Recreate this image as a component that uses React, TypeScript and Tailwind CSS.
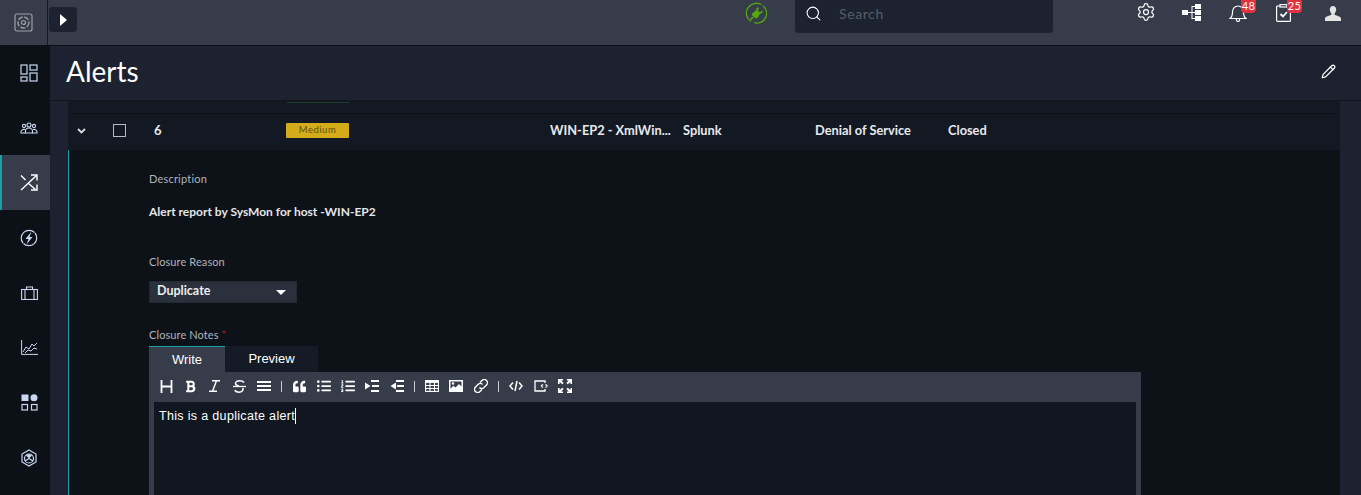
import { Pencil, Search, Settings } from 'lucide-react';
import { FaBold, FaListOl, FaListUl, FaQuoteLeft } from 'react-icons/fa';

const DashboardIcon = () => (
  <svg width="18" height="18" viewBox="0 0 18 18" fill="none" stroke="currentColor" strokeWidth="1.2">
    <rect x="1" y="1" width="6" height="9" />
    <rect x="10" y="1" width="7" height="5" />
    <rect x="1" y="13" width="6" height="4" />
    <rect x="10" y="9" width="7" height="8" />
  </svg>
);

const TeamIcon = () => (
  <svg width="18" height="12" viewBox="0 0 18 12" fill="none" stroke="currentColor" strokeWidth="1.1">
    <circle cx="9" cy="3" r="2" />
    <circle cx="4" cy="4" r="1.6" />
    <circle cx="14" cy="4" r="1.6" />
    <path d="M5.5 11V9a3.5 3 0 0 1 7 0v2z" />
    <path d="M5.5 11H1V9.500a3 2.500 0 0 1 4-2M12.500 11H17V9.500a3 2.500 0 0 0-4-2" />
  </svg>
);

const ShuffleIcon = () => (
  <svg width="18" height="17" viewBox="0 0 18 17" fill="none" stroke="currentColor" strokeWidth="1.4">
    <path d="M1 1.500 5.500 6M8 9l7.500 6.500M1 16 16.500 1.500" />
    <path d="M11 1h6v5.500M17 10.500V16h-6" />
  </svg>
);

const BoltIcon = () => (
  <svg width="18" height="18" viewBox="0 0 18 18" fill="none" stroke="currentColor" strokeWidth="1.2">
    <path d="M14.500 3.500A7.800 7.800 0 0 0 3 14M3.500 14.500A7.800 7.800 0 0 0 15 4" />
    <path d="M11.500 2.500 5.500 10h3l-2 5.500L12.500 8h-3z" fill="currentColor" stroke="none" />
  </svg>
);

const CaseIcon = () => (
  <svg width="17" height="14" viewBox="0 0 17 14" fill="none" stroke="currentColor" strokeWidth="1.1">
    <rect x="0.600" y="3.500" width="15.800" height="10" />
    <path d="M5.500 3.500V1h6v2.500M4 3.500v10M13 3.500v10" />
  </svg>
);

const ChartIcon = () => (
  <svg width="17" height="15" viewBox="0 0 17 15" fill="none" stroke="currentColor" strokeWidth="1">
    <path d="M0.600 0v14.400H17" />
    <path d="M2 12l3-5 3 2 3-5 2 2 3-3" />
    <path d="M4 13l3-3 3 1 3-3 3 1" />
  </svg>
);

const WidgetsIcon = () => (
  <svg width="17" height="17" viewBox="0 0 17 17" fill="none" stroke="currentColor" strokeWidth="1.2">
    <rect x="0.500" y="0.500" width="7" height="6.500" fill="currentColor" stroke="none" />
    <circle cx="13" cy="3.700" r="3.500" fill="currentColor" stroke="none" />
    <rect x="1" y="10.500" width="5.500" height="5.500" />
    <rect x="10.500" y="10.500" width="5.500" height="5.500" />
  </svg>
);

const HexIcon = () => (
  <svg width="16" height="18" viewBox="0 0 16 18" fill="none" stroke="currentColor" strokeWidth="1.2">
    <path d="M8 1l7 4v8l-7 4-7-4V5z" />
    <circle cx="8" cy="9.500" r="4.500" />
    <path d="M5 6.500a4.500 4.500 0 0 1 6 0L8 9.500z" fill="currentColor" stroke="none" />
    <path d="M8 9.500l4 2.500M8 9.500l-4 2.500" />
  </svg>
);

const TreeIcon = () => (
  <svg width="19" height="17" viewBox="0 0 19 17" fill="currentColor">
    <rect x="0" y="6" width="6" height="5" />
    <rect x="13" y="0" width="6" height="5" />
    <rect x="13" y="6" width="6" height="5" />
    <rect x="13" y="12" width="6" height="5" />
    <path d="M6 8h3.500V2H13v1h-2.500v5H13v1h-2.500v5H13v1H9.500V9H6z" />
  </svg>
);

const LogoIcon = () => (
  <svg width="19" height="19" viewBox="0 0 19 19" fill="none" stroke="#9aa0a8">
    <rect x="1" y="1" width="17" height="17" rx="2" strokeWidth="1.200" />
    <circle cx="9.500" cy="9.500" r="5.500" strokeWidth="1.400" strokeDasharray="5 1.500" />
    <circle cx="9.500" cy="9.500" r="2" strokeWidth="1.200" />
  </svg>
);

const PlugIcon = () => (
  <svg width="22" height="22" viewBox="0 0 22 22" fill="none" stroke="#55a80f" strokeWidth="1.300">
    <path d="M16.500 2.800A9.800 9.800 0 0 0 6 19.500M9 20.700a9.800 9.800 0 0 0 9-17" />
    <path d="M6.500 12l5.500-4.500 3.500 3.500-3 5c-2.500 1-5-1.500-6-4z" fill="#55a80f" stroke="none" />
    <path d="M11.500 8l2-2.500M15 11l2.500-1.500M8 15.500l-2.500 2" strokeWidth="1.800" />
  </svg>
);

const UserIcon = () => (
  <svg width="16" height="15" viewBox="0 0 16 15" fill="#e4e4e4">
    <path d="M8 0c2 0 3.200 1.500 3.200 3.600 0 1.700-.8 3-1.500 3.800-.4.500-.2 1.200.4 1.500 2.400 1 5.900 1.500 5.900 3.600V15H0v-2.500C0 10.400 3.500 9.900 5.900 8.900c.6-.3.800-1 .4-1.500C5.600 6.600 4.800 5.300 4.800 3.600 4.800 1.500 6 0 8 0z" />
  </svg>
);

const BellIcon = () => (
  <svg width="18" height="19" viewBox="0 0 18 19" fill="none" stroke="currentColor" strokeWidth="1.200">
    <path d="M1 15.500c2-1.500 2.500-3.500 2.500-6.500C3.500 5.500 6 3 9 3s5.500 2.500 5.500 6c0 3 .5 5 2.500 6.500z" />
    <path d="M7.500 15.500v1.500a1.500 1.500 0 0 0 3 0v-1.500" />
  </svg>
);

const ClipboardIcon = () => (
  <svg width="15" height="18" viewBox="0 0 15 18" fill="none" stroke="currentColor" strokeWidth="1.200">
    <rect x="0.600" y="2" width="13.800" height="15.400" rx="1" />
    <rect x="4" y="0.600" width="7" height="2.400" fill="#363c4a" />
    <path d="M4.500 10l2.500 2.500 4-4.500" strokeWidth="1.800" />
  </svg>
);

const HeadingIcon = () => (
  <svg width="13" height="13" viewBox="0 0 13 13" fill="none" stroke="currentColor" strokeWidth="1.800">
    <path d="M1.500 0v13M11.500 0v13M1.500 6.500h10" />
  </svg>
);

const ItalicIcon = () => (
  <svg width="11" height="12" viewBox="0 0 11 12" fill="none" stroke="currentColor" strokeWidth="1.400">
    <path d="M3 .7h8M0 11.300h8M7.500 .7 3.500 11.300" />
  </svg>
);

const StrikeIcon = () => (
  <svg width="13" height="13" viewBox="0 0 13 13" fill="none" stroke="currentColor" strokeWidth="1.600">
    <path d="M11 2.500C10 1 8.500.8 6.500.8 4 .8 2.500 2 2.500 3.500S4 5.500 6 6" />
    <path d="M0 6.500h13" strokeWidth="1.300" />
    <path d="M10 8c.5 2.500-1.500 4.200-3.800 4.200-2 0-3.500-.5-4.500-2" />
  </svg>
);

const JustifyIcon = () => (
  <svg width="14" height="11" viewBox="0 0 14 11" fill="currentColor">
    <rect x="0" y="0" width="14" height="2" />
    <rect x="0" y="4" width="14" height="2" />
    <rect x="0" y="8" width="14" height="2" />
  </svg>
);

const IndentIcon = () => (
  <svg width="14" height="12" viewBox="0 0 14 12" fill="currentColor">
    <path d="M0 2.500 5.500 6 0 9.500z" />
    <rect x="6" y="0" width="8" height="2" />
    <rect x="7" y="5" width="7" height="2" />
    <rect x="6" y="10" width="8" height="2" />
  </svg>
);

const OutdentIcon = () => (
  <svg width="14" height="12" viewBox="0 0 14 12" fill="currentColor">
    <path d="M6 2.500.5 6 6 9.500z" />
    <rect x="6" y="0" width="8" height="2" />
    <rect x="7" y="5" width="7" height="2" />
    <rect x="6" y="10" width="8" height="2" />
  </svg>
);

const TableIcon = () => (
  <svg width="14" height="12" viewBox="0 0 14 12" fill="none" stroke="currentColor" strokeWidth="1.100">
    <rect x="0.600" y="0.600" width="12.800" height="10.800" />
    <path d="M0 1.800h14" strokeWidth="2.200" />
    <path d="M0 5.500h14M0 8.500h14M5 2v10M9.500 2v10" />
  </svg>
);

const ImageIcon = () => (
  <svg width="14" height="12" viewBox="0 0 14 12" fill="none">
    <path d="M0 0h14v12H0zM1.500 1.500v7.200l3-3 2 1.800 3.500-3.500 2.500 2.500v-5z" fill="currentColor" fillRule="evenodd" />
    <circle cx="4" cy="3.500" r="1.200" fill="currentColor" />
  </svg>
);

const LinkIcon = () => (
  <svg width="14" height="14" viewBox="0 0 14 14" fill="none" stroke="currentColor" strokeWidth="1.400">
    <path d="M6 3.500 8 1.500a2.800 2.800 0 0 1 4.500 4.500L9.500 9a2.800 2.800 0 0 1-4-.5" />
    <path d="M8 10.500 6 12.500a2.800 2.800 0 0 1-4.500-4.500L4.500 5a2.800 2.800 0 0 1 4 .5" />
  </svg>
);

const CodeIcon = () => (
  <svg width="14" height="12" viewBox="0 0 14 12" fill="none" stroke="currentColor" strokeWidth="1.500">
    <path d="M4 2.500 1 6l3 3.500M10 2.500 13 6l-3 3.500M8 1 6 11" />
  </svg>
);

const PreviewIcon = () => (
  <svg width="14" height="12" viewBox="0 0 14 12" fill="none" stroke="currentColor" strokeWidth="1.300">
    <path d="M11 3V1H1v10h10V9" />
    <path d="M7 6l2-1.500M7 6l2 1.500M13.500 6 11.500 4.500M13.500 6 11.500 7.500" />
  </svg>
);

const ExpandIcon = () => (
  <svg width="14" height="14" viewBox="0 0 14 14" fill="currentColor">
    <path d="M0 0h5v1.600H3.200l2.400 2.400-1.300 1.300L1.600 2.900V5H0zM14 0v5h-1.600V2.900L9.700 5.300 8.400 4l2.400-2.400H9V0zM0 14V9h1.600v2.100l2.700-2.400 1.300 1.300-2.400 2.400H5V14zM14 14H9v-1.600h1.800L8.400 10l1.300-1.300 2.700 2.400V9H14z" />
  </svg>
);

const navItems = [
  { icon: <DashboardIcon />, active: false },
  { icon: <TeamIcon />, active: false },
  { icon: <ShuffleIcon />, active: true },
  { icon: <BoltIcon />, active: false },
  { icon: <CaseIcon />, active: false },
  { icon: <ChartIcon />, active: false },
  { icon: <WidgetsIcon />, active: false },
  { icon: <HexIcon />, active: false },
];

const Divider = () => <span className="mx-[5px] h-[11px] w-px bg-[#c8ccd2]" />;

const ToolButton = ({ children }: { children: React.ReactNode }) => (
  <span className="flex w-[24.400px] shrink-0 items-center justify-center text-white">{children}</span>
);

const Badge = ({ children, className }: { children: React.ReactNode; className: string }) => (
  <span
    className={`absolute flex h-[13px] w-[15px] justify-center rounded-b-sm bg-[#e0313c] text-[11px] leading-[12px] tracking-[0.4px] text-white ${className}`}
  >
    {children}
  </span>
);

const App = () => {
  return (
    <div className="flex h-[495px] w-[1361px] flex-col overflow-hidden bg-[#1c2230] font-['Lato',sans-serif]">
      {/* Top bar */}
      <div className="flex h-[46px] shrink-0 items-start border-b border-[#0b0e13] bg-[#363c4a]">
        <div className="flex h-[45px] w-[48px] shrink-0 items-center justify-center border-r border-[#14181f]">
          <LogoIcon />
        </div>
        <button className="mt-[7px] ml-px flex h-[25px] w-[28px] items-center justify-center rounded-sm bg-[#1c2230]">
          <span className="h-0 w-0 border-y-[6px] border-l-[7px] border-y-transparent border-l-white" />
        </button>
        <div className="mt-[1px] ml-[667px] flex h-[24px] w-[24px] items-center justify-center">
          <PlugIcon />
        </div>
        <div className="ml-[27px] flex h-[33px] w-[258px] items-center rounded-b-sm bg-[#1c2230] pb-[6px] pl-[10px]">
          <Search size={17} strokeWidth={1.5} className="text-white" />
          <span className="ml-[17px] text-[14px] tracking-[0.6px] text-[#565c68]">Search</span>
        </div>
        <Settings size={20} strokeWidth={1.500} className="mt-[2px] ml-[83px] text-white" />
        <div className="mt-[4px] ml-[26px] text-white">
          <TreeIcon />
        </div>
        <div className="relative mt-[3px] ml-[28px] text-white">
          <BellIcon />
          <Badge className="top-[-3px] left-[12px]">48</Badge>
        </div>
        <div className="relative mt-[4px] ml-[29px] text-white">
          <ClipboardIcon />
          <Badge className="top-[-4px] left-[11px]">25</Badge>
        </div>
        <div className="mt-[6px] ml-[34px]">
          <UserIcon />
        </div>
      </div>

      <div className="flex min-h-0 flex-1">
        {/* Sidebar */}
        <div className="-mt-px flex w-[50px] shrink-0 flex-col bg-[#0c1118]">
          {navItems.map((item, i) => (
            <div
              key={i}
              className={`flex h-[55px] shrink-0 items-center justify-center ${
                item.active ? 'border-l-2 border-[#1a9ea6] bg-[#363c4a] pl-[6px] text-white' : 'pl-[8px] text-[#c9d8f0]'
              }`}
            >
              {item.icon}
            </div>
          ))}
        </div>

        <div className="flex min-w-0 flex-1 flex-col">
          {/* Page header */}
          <div className="flex h-[55px] shrink-0 items-center justify-between border-b border-[#11151c] bg-[#1c2230] pr-[25px] pb-[4px] pl-[16px]">
            <h1 className="text-[28px] leading-none text-white">Alerts</h1>
            <Pencil size={15} strokeWidth={2} className="text-white" />
          </div>

          <div className="flex min-h-0 flex-1 pr-[21px] pl-[18px]">
            <div className="flex min-w-0 flex-1 flex-col">
              {/* Table rows */}
              <div className="h-[13px] shrink-0 border-b border-[#0c1118] bg-[#121923] pt-px pl-[219px]">
                <div className="h-px w-[62px] bg-[#1b3f2b]" />
              </div>
              <div className="grid h-[36px] shrink-0 grid-cols-[45px_41px_132px_264px_133px_132px_133px_1fr] items-center bg-[#121923] pb-[3px] text-[12.800px] font-bold text-[#e8eaed]">
                <svg width="9" height="6" viewBox="0 0 9 6" fill="none" stroke="#d8dade" strokeWidth="1.800" className="ml-[9px]">
                  <path d="M1 1l3.500 3.500L8 1" />
                </svg>
                <span className="h-[13px] w-[13px] border border-[#b8bcc2]" />
                <span className="text-[13px]">6</span>
                <span className="flex h-[15px] w-[63px] items-center justify-center rounded-[1px] bg-[#d4ac19] text-[9.500px] font-normal tracking-[0.5px] text-[#5c4f12]">
                  Medium
                </span>
                <span className="truncate">WIN-EP2 - XmlWin...</span>
                <span>Splunk</span>
                <span>Denial of Service</span>
                <span>Closed</span>
              </div>

              {/* Expanded row */}
              <div className="min-h-0 flex-1 border-l border-[#1a9ea6] bg-[#0d1118] pl-[80px]">
                <div className="mt-[23px] text-[11px] leading-[12px] tracking-[0.2px] text-[#b0b4ba]">Description</div>
                <div className="mt-[20px] text-[12px] leading-[13px] font-bold text-[#e4e6e9]">
                  Alert report by SysMon for host -WIN-EP2
                </div>
                <div className="mt-[38px] text-[11px] leading-[12px] tracking-[0.1px] text-[#b0b4ba]">Closure Reason</div>
                <div className="mt-[13px] flex h-[22px] w-[148px] items-center justify-between border border-[#232933] bg-[#2a303c] pr-[10px] pb-[2px] pl-[7px] text-[12.500px] font-bold text-[#eceef0]">
                  Duplicate
                  <span className="mt-[2px] h-0 w-0 border-x-[5px] border-t-[5px] border-x-transparent border-t-white" />
                </div>
                <div className="mt-[26px] text-[11px] leading-[12px] tracking-[0.1px] text-[#b0b4ba]">
                  Closure Notes <span className="text-[#b0202a]">*</span>
                </div>
                <div className="mt-[5px] flex h-[26px] font-['Liberation_Sans',sans-serif] text-[13px] text-white">
                  <div className="flex w-[76px] items-center justify-center border-t border-[#1a9ea6] bg-[#363c4a]">Write</div>
                  <div className="flex w-[93px] items-center justify-center bg-[#141b26]">Preview</div>
                </div>
                <div className="w-[992px] bg-[#363c4a] px-[5px]">
                  <div className="flex h-[30px] items-center pb-[2px]">
                    <ToolButton><HeadingIcon /></ToolButton>
                    <ToolButton><FaBold size={13} /></ToolButton>
                    <ToolButton><ItalicIcon /></ToolButton>
                    <ToolButton><StrikeIcon /></ToolButton>
                    <ToolButton><JustifyIcon /></ToolButton>
                    <Divider />
                    <ToolButton><FaQuoteLeft size={13} /></ToolButton>
                    <ToolButton><FaListUl size={14} /></ToolButton>
                    <ToolButton><FaListOl size={14} /></ToolButton>
                    <ToolButton><IndentIcon /></ToolButton>
                    <ToolButton><OutdentIcon /></ToolButton>
                    <Divider />
                    <ToolButton><TableIcon /></ToolButton>
                    <ToolButton><ImageIcon /></ToolButton>
                    <ToolButton><LinkIcon /></ToolButton>
                    <Divider />
                    <ToolButton><CodeIcon /></ToolButton>
                    <ToolButton><PreviewIcon /></ToolButton>
                    <ToolButton><ExpandIcon /></ToolButton>
                  </div>
                  <div className="flex h-[200px] items-start bg-[#101720] pt-[6px] pl-[5px] font-['Liberation_Sans',sans-serif] text-[12.500px] leading-[16px] tracking-[0.33px] text-white">
                    This is a duplicate alert
                    <span className="h-[16px] w-px bg-white" />
                  </div>
                </div>
              </div>
            </div>
          </div>
        </div>
      </div>
    </div>
  );
};

export default App;
